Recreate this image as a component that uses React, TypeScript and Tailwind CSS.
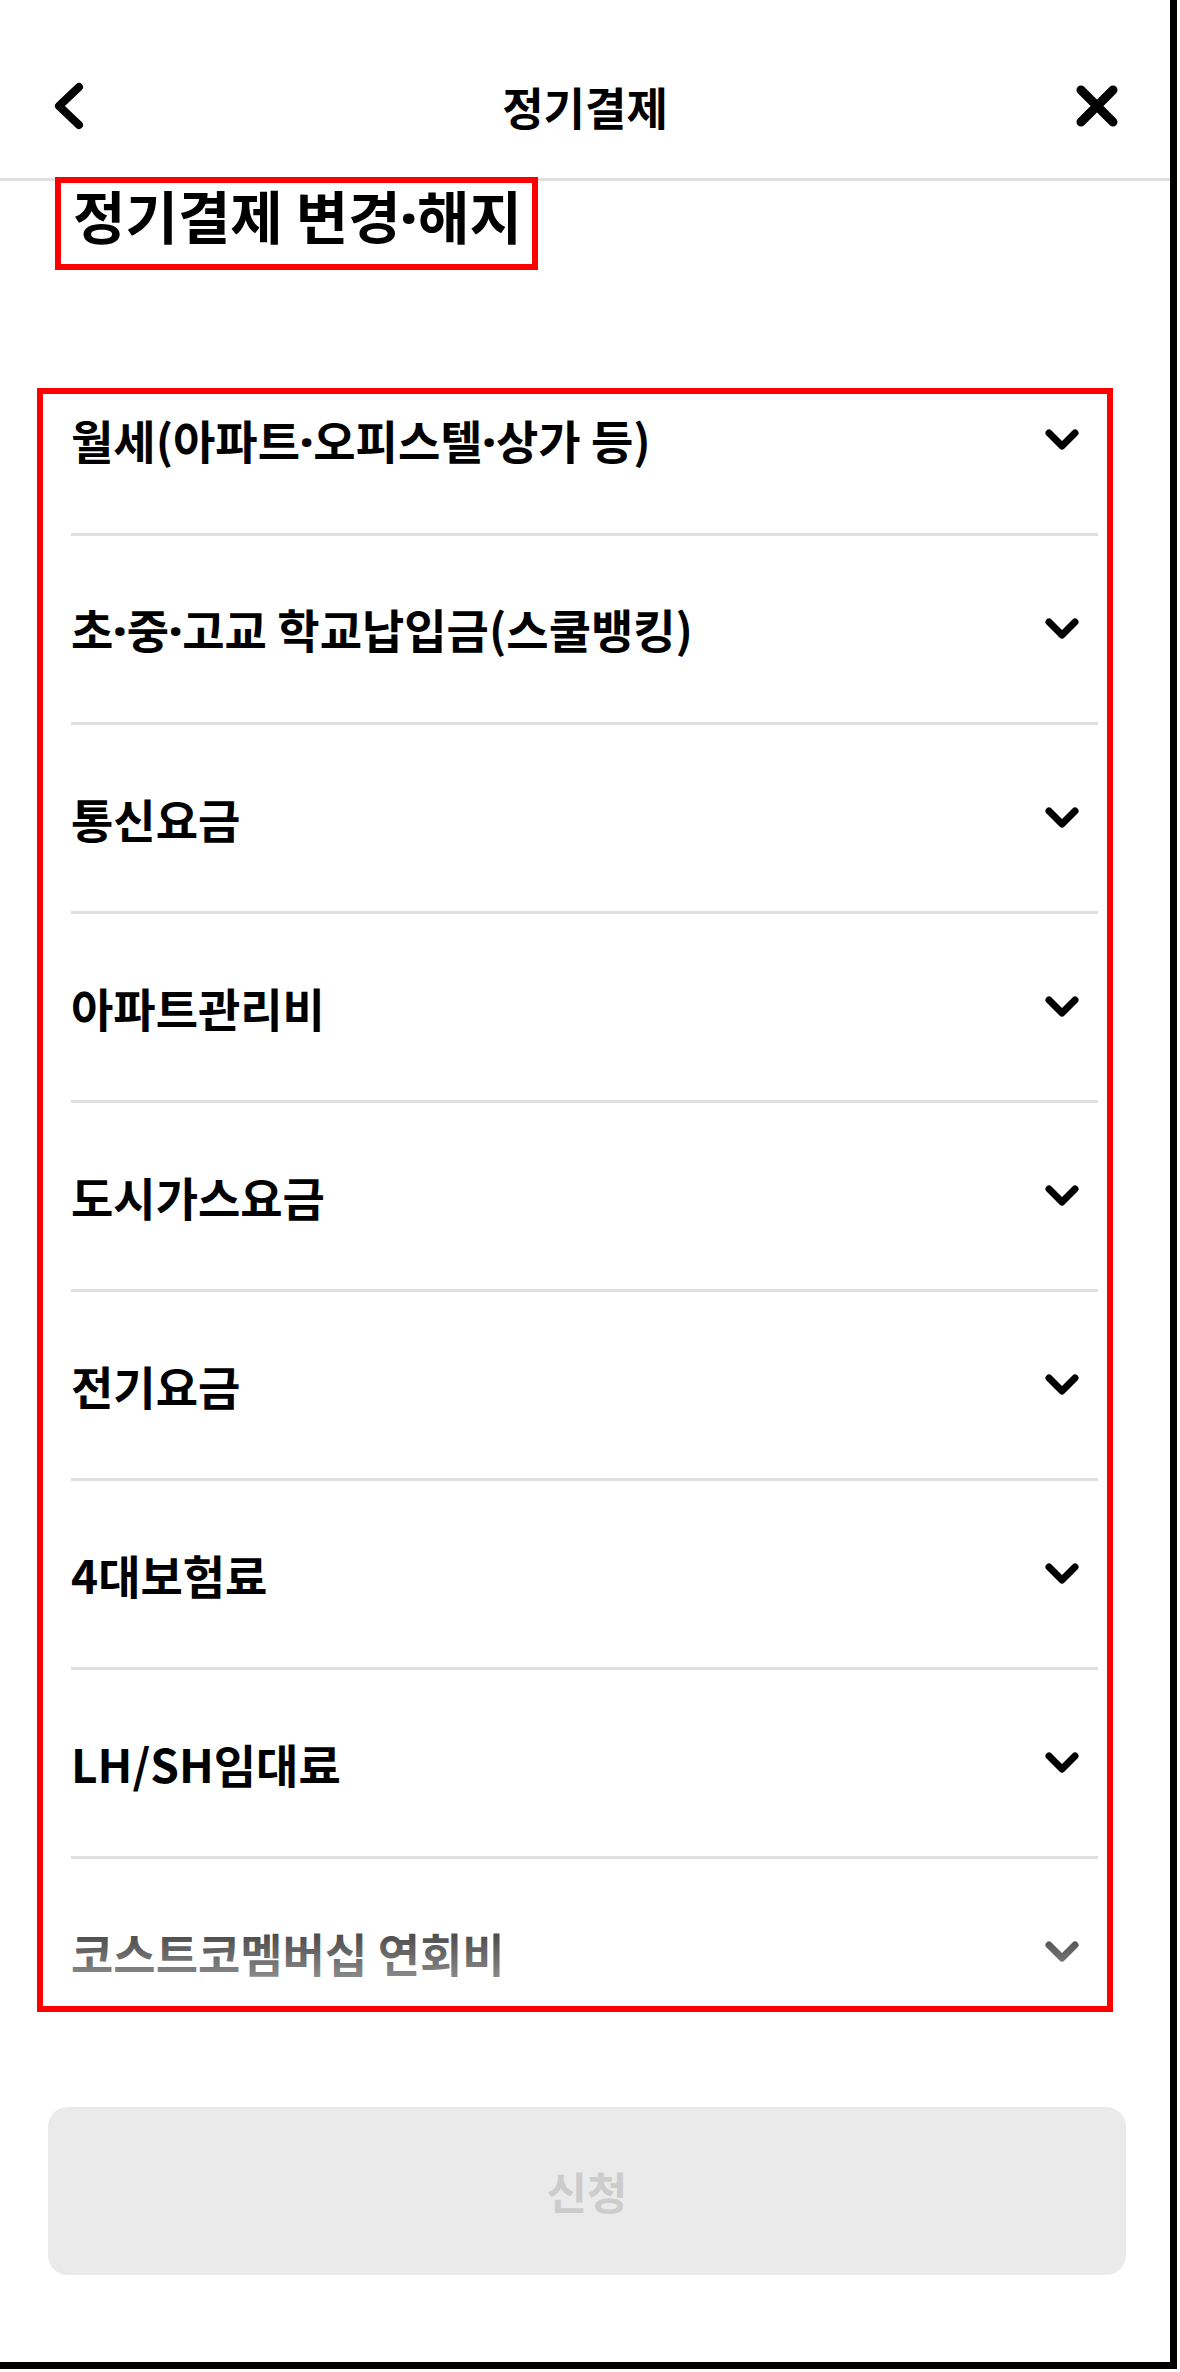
import React from 'react';

const items = [
  '월세(아파트·오피스텔·상가 등)',
  '초·중·고교 학교납입금(스쿨뱅킹)',
  '통신요금',
  '아파트관리비',
  '도시가스요금',
  '전기요금',
  '4대보험료',
  'LH/SH임대료',
  '코스트코멤버십 연회비',
];

// The CJK font draws "·" full width; the design uses a tight Latin dot.
function Label({ text }: { text: string }) {
  const parts = text.split('·');
  return (
    <>
      {parts.map((part, i) => (
        <React.Fragment key={i}>
          {i > 0 && <span className="font-['Noto_Sans',sans-serif] font-black">·</span>}
          {part}
        </React.Fragment>
      ))}
    </>
  );
}

function BackIcon() {
  return (
    <svg width="32" height="48" viewBox="0 0 32 48" fill="none">
      <path d="M26 5 L6 24 L26 43" stroke="#000" strokeWidth="8" strokeLinecap="round" strokeLinejoin="round" />
    </svg>
  );
}

function CloseIcon() {
  return (
    <svg width="44" height="44" viewBox="0 0 44 44" fill="none">
      <path d="M6 6 L38 38 M38 6 L6 38" stroke="#000" strokeWidth="9" strokeLinecap="round" />
    </svg>
  );
}

function ChevronDown() {
  return (
    <svg width="36" height="24" viewBox="0 0 36 24" fill="none">
      <path d="M5 5 L18 18 L31 5" stroke="#000" strokeWidth="7" strokeLinecap="round" strokeLinejoin="round" />
    </svg>
  );
}

function PaymentRow({ label }: { label: string }) {
  return (
    <div className="flex h-[189px] items-center justify-between border-b-[3px] border-[#e0e0e0]">
      <span className="text-[46px] font-bold leading-none text-black">
        <Label text={label} />
      </span>
      <span className="mr-[18px] flex">
        <ChevronDown />
      </span>
    </div>
  );
}

export default function App() {
  return (
    <div className="h-[2372px] w-[1180px] bg-white font-['Noto_Sans_CJK_KR','Noto_Sans',sans-serif]">
      <div className="h-[2369px] w-[1177px] border-r-[7px] border-b-[7px] border-black">
        {/* Header */}
        <div className="grid h-[181px] grid-cols-[1fr_auto_1fr] items-center border-b-[3px] border-[#e0e0e0] pt-[34px]">
          <div className="flex pl-[53px]">
            <BackIcon />
          </div>
          <h1 className="text-[45px] font-semibold leading-none text-black">정기결제</h1>
          <div className="flex justify-end pr-[51px]">
            <CloseIcon />
          </div>
        </div>

        {/* Title */}
        <div className="-mt-[4px] ml-[55px] h-[93px] w-[483px] border-[6px] border-[#ff0000] pl-[12px] pt-[3px]">
          <h2 className="text-[57px] font-bold leading-none text-black">
            <Label text="정기결제 변경·해지" />
          </h2>
        </div>

        {/* Payment list */}
        <div className="relative ml-[37px] mt-[118px] h-[1624px] w-[1076px] overflow-hidden border-[6px] border-[#ff0000]">
          <div className="-mt-[47px] pl-[28px] pr-[9px]">
            {items.map((label) => (
              <PaymentRow key={label} label={label} />
            ))}
          </div>
          <div className="pointer-events-none absolute inset-x-0 bottom-0 h-[126px] bg-linear-to-b from-white/0 to-white/70" />
        </div>

        {/* Submit */}
        <div className="ml-[48px] mt-[95px] flex h-[168px] w-[1078px] items-center justify-center rounded-[20px] bg-[#eaeaea]">
          <span className="text-[44px] font-bold leading-none text-[#cccccc]">신청</span>
        </div>
      </div>
    </div>
  );
}
